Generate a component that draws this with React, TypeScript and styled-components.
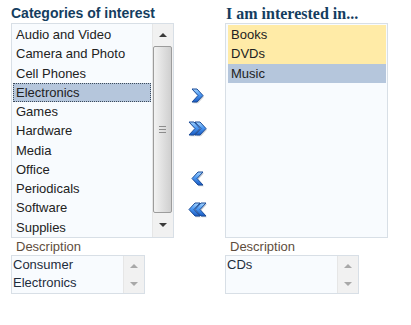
import React from "react";
import styled, { createGlobalStyle } from "styled-components";

const Global = createGlobalStyle`
  html, body { margin: 0; padding: 0; background: #ffffff; }
  body { font-family: "Liberation Sans", Arial, sans-serif; }
`;

const Page = styled.div`
  display: grid;
  grid-template-columns: 163px 51px 163px;
  padding: 4px 0 0 11px;
`;

const Column = styled.div`
  display: flex;
  flex-direction: column;
`;

const Title = styled.div<{ $serif?: boolean }>`
  height: 19px;
  line-height: 19px;
  font-family: ${(p) =>
    p.$serif ? '"Liberation Serif", "Times New Roman", serif' : '"Liberation Sans", Arial, sans-serif'};
  font-size: ${(p) => (p.$serif ? "16px" : "14px")};
  font-weight: bold;
  color: #143d5f;
  white-space: nowrap;
  padding-left: ${(p) => (p.$serif ? "1px" : "0")};
`;

const ListBox = styled.div`
  box-sizing: border-box;
  width: 163px;
  height: 215px;
  border: 1px solid #d8dfe6;
  background: #f8fbfe;
  display: flex;
`;

const Items = styled.div<{ $pl: number }>`
  flex: 1;
  padding: 1px 1px 0 ${(p) => p.$pl}px;
  display: flex;
  flex-direction: column;
  min-width: 0;
`;

const Item = styled.div<{ $state?: "selected" | "focused" | "new" }>`
  box-sizing: border-box;
  height: 19.4px;
  line-height: 19px;
  font-size: 13px;
  color: #222;
  padding-left: 3px;
  white-space: nowrap;
  background: ${(p) =>
    p.$state === "new" ? "#ffeba7" : p.$state ? "#b5c6dc" : "transparent"};
  outline: ${(p) => (p.$state === "focused" ? "1px dotted #3c4a5a" : "none")};
  outline-offset: -1px;
`;

const ScrollBar = styled.div`
  width: 20px;
  display: flex;
  flex-direction: column;
  background: #f1f1f1;
  border-left: 1px solid #e6e6e6;
`;

const ArrowCell = styled.div<{ $h: number }>`
  height: ${(p) => p.$h}px;
  display: flex;
  align-items: center;
  justify-content: center;
  flex: none;
`;

const Tri = styled.div<{ $down?: boolean; $dim?: boolean }>`
  width: 0;
  height: 0;
  border-left: 4px solid transparent;
  border-right: 4px solid transparent;
  ${(p) =>
    p.$down
      ? `border-top: 4px solid ${p.$dim ? "#a8a8a8" : "#3a3a3a"};`
      : `border-bottom: 4px solid ${p.$dim ? "#a8a8a8" : "#3a3a3a"};`}
`;

const Thumb = styled.div`
  flex: 1;
  margin: 0 1px 0 0;
  box-sizing: border-box;
  border: 1px solid #9c9c9c;
  border-radius: 2px;
  background: linear-gradient(to right, #f2f2f2 0%, #e4e4e4 40%, #cfcfcf 100%);
  display: flex;
  align-items: center;
  justify-content: center;
`;

const Grip = styled.div`
  width: 7px;
  height: 7px;
  background: repeating-linear-gradient(
    to bottom,
    #8c8c8c 0px,
    #8c8c8c 1px,
    transparent 1px,
    transparent 3px
  );
`;

const Middle = styled.div`
  display: flex;
  flex-direction: column;
  align-items: center;
  padding-top: 84px;
  padding-right: 3px;
`;

const MoveButton = styled.button<{ $mt: number }>`
  margin-top: ${(p) => p.$mt}px;
  padding: 0;
  border: none;
  background: transparent;
  width: 22px;
  height: 17px;
  display: flex;
  align-items: center;
  justify-content: center;
  cursor: pointer;
`;

const DescLabel = styled.div`
  height: 16px;
  line-height: 16px;
  margin-top: 1px;
  padding-left: 5px;
  font-size: 13px;
  color: #5e4d3d;
`;

const TextArea = styled.div`
  box-sizing: border-box;
  width: 134px;
  height: 39px;
  border: 1px solid #d8dfe6;
  background: #f8fbfe;
  display: flex;
`;

const TextBody = styled.div`
  flex: 1;
  padding: 0 0 0 1px;
  font-size: 13px;
  line-height: 18px;
  color: #1e2d3c;
`;

const ChevronDefs = () => (
  <defs>
    <linearGradient id="chev" x1="0" y1="0" x2="0" y2="1">
      <stop offset="0" stopColor="#a6d6ff" />
      <stop offset="0.45" stopColor="#4a97f2" />
      <stop offset="1" stopColor="#1a5cc4" />
    </linearGradient>
  </defs>
);

const chevronRight = (x: number) =>
  `M${x + 1} 1 L${x + 6} 1 L${x + 12} 7.5 L${x + 6} 14 L${x + 1} 14 L${x + 7} 7.5 Z`;
const chevronLeft = (x: number) =>
  `M${x + 12} 1 L${x + 7} 1 L${x + 1} 7.5 L${x + 7} 14 L${x + 12} 14 L${x + 6} 7.5 Z`;

const Chevron: React.FC<{ dir: "right" | "left"; double?: boolean }> = ({ dir, double }) => {
  const w = double ? 20 : 14;
  const offsets = double ? (dir === "right" ? [0, 6] : [6, 0]) : [0];
  const fn = dir === "right" ? chevronRight : chevronLeft;
  return (
    <svg width={w} height={17} viewBox={`0 0 ${w} 17`}>
      <ChevronDefs />
      {offsets.map((o) => (
        <path key={"s" + o} d={fn(o)} transform="translate(1,1.2)" fill="#8f99a6" opacity="0.5" />
      ))}
      {offsets.map((o) => (
        <path
          key={o}
          d={fn(o)}
          fill="url(#chev)"
          stroke="#1c4c98"
          strokeWidth="1"
          strokeLinejoin="round"
        />
      ))}
    </svg>
  );
};

const categories = [
  "Audio and Video",
  "Camera and Photo",
  "Cell Phones",
  "Electronics",
  "Games",
  "Hardware",
  "Media",
  "Office",
  "Periodicals",
  "Software",
  "Supplies",
];

export default function App() {
  return (
    <>
      <Global />
      <Page>
        <Column>
          <Title>Categories of interest</Title>
          <ListBox>
            <Items $pl={1}>
              {categories.map((c) => (
                <Item key={c} $state={c === "Electronics" ? "focused" : undefined}>
                  {c}
                </Item>
              ))}
            </Items>
            <ScrollBar>
              <ArrowCell $h={22}>
                <Tri />
              </ArrowCell>
              <Thumb>
                <Grip />
              </Thumb>
              <ArrowCell $h={24}>
                <Tri $down />
              </ArrowCell>
            </ScrollBar>
          </ListBox>
          <DescLabel>Description</DescLabel>
          <TextArea>
            <TextBody>
              Consumer
              <br />
              Electronics
            </TextBody>
            <ScrollBar>
              <ArrowCell $h={19}>
                <Tri $dim />
              </ArrowCell>
              <ArrowCell $h={18}>
                <Tri $down $dim />
              </ArrowCell>
            </ScrollBar>
          </TextArea>
        </Column>
        <Middle>
          <MoveButton $mt={0} aria-label="Move">
            <Chevron dir="right" />
          </MoveButton>
          <MoveButton $mt={16} aria-label="Move all">
            <Chevron dir="right" double />
          </MoveButton>
          <MoveButton $mt={33} aria-label="Remove">
            <Chevron dir="left" />
          </MoveButton>
          <MoveButton $mt={14} aria-label="Remove all">
            <Chevron dir="left" double />
          </MoveButton>
        </Middle>
        <Column>
          <Title $serif>I am interested in...</Title>
          <ListBox>
            <Items $pl={2}>
              <Item $state="new">Books</Item>
              <Item $state="new">DVDs</Item>
              <Item $state="selected">Music</Item>
            </Items>
          </ListBox>
          <DescLabel>Description</DescLabel>
          <TextArea>
            <TextBody>CDs</TextBody>
            <ScrollBar>
              <ArrowCell $h={19}>
                <Tri $dim />
              </ArrowCell>
              <ArrowCell $h={18}>
                <Tri $down $dim />
              </ArrowCell>
            </ScrollBar>
          </TextArea>
        </Column>
      </Page>
    </>
  );
}
